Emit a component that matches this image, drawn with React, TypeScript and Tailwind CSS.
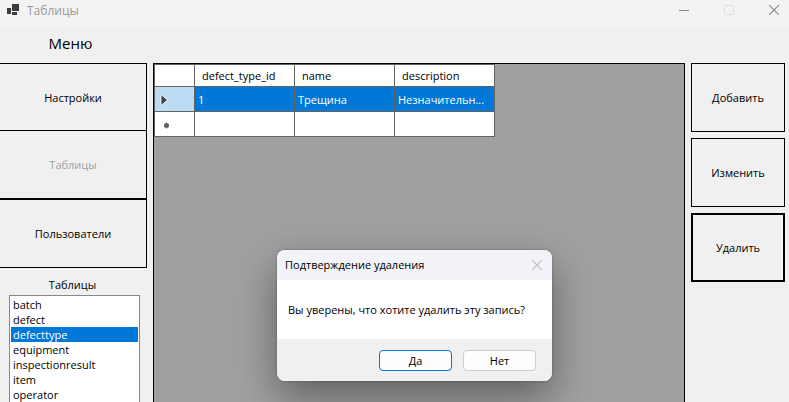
import React from "react";

const tables = ["batch", "defect", "defecttype", "equipment", "inspectionresult", "item", "operator"];
const columns = ["defect_type_id", "name", "description"];
const record = ["1", "Трещина", "Незначительн..."];

const cell = "border-r border-b border-[#646464] px-0 pb-0 font-normal text-left whitespace-nowrap";

function TitleBar() {
  return (
    <header className="flex h-[26px] shrink-0 items-start justify-between bg-[#f3f3f3] pr-[10px] pl-[7px]">
      <div className="flex items-start">
        <svg className="mt-[4px] h-[11px] w-[12px]" viewBox="0 0 12 11" fill="#3c3c3c" shapeRendering="crispEdges" aria-hidden="true">
          <rect x="5" y="0" width="7" height="7" />
          <rect x="0" y="4" width="4" height="6" />
          <rect x="5" y="8" width="5" height="3" />
        </svg>
        <h1 className="ml-2 text-[12px] leading-[22px] text-[#999999]">Таблицы</h1>
      </div>
      <div className="flex h-5 items-center gap-[35px] text-[#8c8c8c]">
        <button type="button" aria-label="Свернуть">
          <svg className="h-[10px] w-[10px]" viewBox="0 0 10 10" stroke="currentColor" fill="none">
            <path d="M0 5.5H10" />
          </svg>
        </button>
        <button type="button" aria-label="Развернуть" disabled className="text-[#dedede]">
          <svg className="h-[10px] w-[10px]" viewBox="0 0 10 10" stroke="currentColor" fill="none">
            <rect x="0.5" y="0.5" width="9" height="9" rx="1" />
          </svg>
        </button>
        <button type="button" aria-label="Закрыть">
          <svg className="h-[10px] w-[10px]" viewBox="0 0 10 10" stroke="currentColor" strokeWidth="1.2" fill="none">
            <path d="M0 0L10 10M10 0L0 10" />
          </svg>
        </button>
      </div>
    </header>
  );
}

function Sidebar() {
  const button = "h-[69px] w-full shrink-0 border border-l-0 border-black bg-[#f0f0f0]";
  return (
    <aside className="flex w-[147px] shrink-0 flex-col">
      <h2 className="h-[37px] shrink-0 pr-[6px] text-center text-[15px] leading-[34px]">Меню</h2>
      <nav className="flex flex-col">
        <button type="button" className={button}>Настройки</button>
        <button type="button" disabled className={`${button} -mt-[2px] text-[#a0a0a0]`}>Таблицы</button>
        <button type="button" className={button}>Пользователи</button>
      </nav>
      <label htmlFor="tables" className="h-[27px] shrink-0 pr-[2px] text-center leading-[34px]">Таблицы</label>
      <select
        id="tables"
        size={7}
        defaultValue="defecttype"
        className="mr-[7px] ml-[9px] min-h-0 flex-1 appearance-none overflow-hidden border border-b-0 border-[#828790] bg-white p-px outline-none"
      >
        {tables.map((name) => (
          <option
            key={name}
            value={name}
            className="h-[15px] min-h-0 p-0 pl-[2px] text-[11px] leading-[15px] text-black checked:bg-[linear-gradient(#0078d7,#0078d7)] checked:text-white"
          >
            {name}
          </option>
        ))}
      </select>
    </aside>
  );
}

function DataGrid() {
  return (
    <main className="mt-[37px] min-w-0 flex-1 overflow-hidden border border-b-0 border-black bg-[#a0a0a0]">
      <table className="w-[341px] table-fixed border-separate border-spacing-0 border-t border-l border-[#646464] bg-white">
        <colgroup>
          <col className="w-[40px]" />
          <col className="w-[100px]" />
          <col className="w-[100px]" />
          <col className="w-[100px]" />
        </colgroup>
        <thead>
          <tr className="h-[22px]">
            <th className={`${cell} pt-0`} />
            {columns.map((name) => (
              <th key={name} scope="col" className={`${cell} pt-0 pl-[7px]`}>{name}</th>
            ))}
          </tr>
        </thead>
        <tbody>
          <tr className="h-[25px] bg-[#0078d7] text-white">
            <th scope="row" aria-label="Текущая запись" className={`${cell} bg-[#bcdcf4] pt-[2px]`}>
              <svg className="ml-[5px] block h-[12px] w-[9px]" viewBox="0 0 9 12" aria-hidden="true">
                <path d="M1 0.5L7.5 6L1 11.5Z" fill="#404040" stroke="#ffffff" strokeWidth="0.8" />
              </svg>
            </th>
            {record.map((value) => (
              <td key={value} className={`${cell} pt-[2px] pl-[3px]`}>{value}</td>
            ))}
          </tr>
          <tr className="h-[25px]">
            <th scope="row" aria-label="Новая запись" className={`${cell} pt-[2px]`}>
              <svg className="ml-[8px] block h-[7px] w-[7px]" viewBox="0 0 7 7" stroke="#606060" aria-hidden="true">
                <circle cx="3.5" cy="3.5" r="2" fill="#404040" />
                <path d="M3.5 0.5V6.5M1 2L6 5M6 2L1 5" />
              </svg>
            </th>
            {columns.map((name) => (
              <td key={name} className={cell} />
            ))}
          </tr>
        </tbody>
      </table>
    </main>
  );
}

function Actions() {
  const button = "h-[69px] w-full border-black bg-[#f0f0f0]";
  return (
    <div className="mt-[37px] mr-1 flex w-[94px] shrink-0 flex-col gap-[6px]">
      <button type="button" className={`${button} border`}>Добавить</button>
      <button type="button" className={`${button} border`}>Изменить</button>
      <button type="button" className={`${button} border-2`}>Удалить</button>
    </div>
  );
}

function ConfirmDialog() {
  const button = "h-[21px] w-[73px] rounded-[4px] border bg-[#fdfdfd] leading-[19px]";
  return (
    <div
      role="dialog"
      aria-labelledby="confirm-title"
      className="absolute top-[250px] left-[277px] w-[275px] overflow-hidden rounded-[8px] bg-white shadow-[0_16px_40px_rgba(0,0,0,0.4),0_0_2px_rgba(0,0,0,0.4)]"
    >
      <div className="flex h-[30px] items-center justify-between bg-[#f1f3f9] pr-[10px] pl-2">
        <h2 id="confirm-title">Подтверждение удаления</h2>
        <button type="button" aria-label="Закрыть" className="text-[#bcbec3]">
          <svg className="h-[10px] w-[10px]" viewBox="0 0 10 10" stroke="currentColor" strokeWidth="1.2" fill="none">
            <path d="M0 0L10 10M10 0L0 10" />
          </svg>
        </button>
      </div>
      <p className="h-[59px] pl-[11px] leading-[60px] whitespace-nowrap">Вы уверены, что хотите удалить эту запись?</p>
      <div className="flex h-[42px] items-center justify-end gap-[11px] bg-[#f0f0f0] pr-4">
        <button type="button" className={`${button} border-[#0078d4]`}>Да</button>
        <button type="button" className={`${button} border-[#cccccc]`}>Нет</button>
      </div>
    </div>
  );
}

export default function App() {
  return (
    <div className="relative flex h-screen flex-col overflow-hidden bg-[#f0f0f0] font-['Open_Sans','Noto_Sans',sans-serif] text-[11px] leading-4 text-black">
      <TitleBar />
      <div className="flex min-h-0 flex-1 gap-[6px]">
        <Sidebar />
        <DataGrid />
        <Actions />
      </div>
      <ConfirmDialog />
    </div>
  );
}
